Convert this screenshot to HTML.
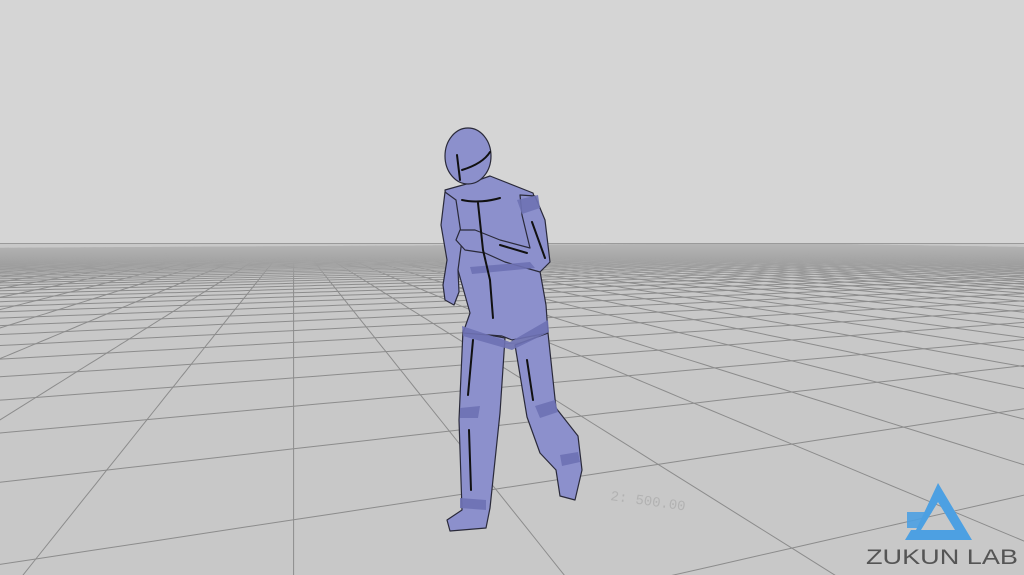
<!DOCTYPE html>
<html><head><meta charset="utf-8"><style>
html,body{margin:0;padding:0;width:1024px;height:575px;overflow:hidden;background:#d4d4d4}
svg{display:block}
</style></head><body>
<svg id="s" width="1024" height="575" viewBox="0 0 1024 575" xmlns="http://www.w3.org/2000/svg">
<defs><linearGradient id="fd" x1="0" y1="0" x2="0" y2="1">
<stop offset="0" stop-color="#c8c8c8" stop-opacity="0.7"/>
<stop offset="1" stop-color="#c8c8c8" stop-opacity="0"/></linearGradient></defs>
<rect width="1024" height="243" fill="#d5d5d5"/>
<rect y="243" width="1024" height="332" fill="#c8c8c8"/>
<g id="grid" stroke="#8c8c8c" stroke-width="1" fill="none"></g>
<rect y="243" width="1024" height="40" fill="url(#fd)"/>
<line x1="0" y1="243.5" x2="1024" y2="243.5" stroke="#9a9a9a" stroke-width="1"/>
<text x="610" y="500" font-family="Liberation Mono, monospace" font-size="14" fill="#b2b2b2" transform="rotate(8 610 500)">2: 500.00</text>
<g stroke="#2a2a3a" stroke-width="1.2" stroke-linejoin="round" fill="#8c90cc">
<path d="M515,345 L548,333 L556,408 L578,436 L582,470 L575,500 L560,496 L556,470 L540,453 L527,417 Z"/>
<path d="M463,330 L505,338 L500,413 L490,508 L486,528 L450,531 L447,520 L462,510 L459,420 Z"/>
<path d="M445,190 L470,183 L490,176 L533,193 L540,215 L538,260 L546,305 L548,333 L512,340 L502,336 L463,333 L470,313 L458,270 L450,240 Z"/>
<path d="M445,192 L456,200 L462,240 L458,270 L459,292 L454,305 L445,300 L443,285 L447,260 L441,225 Z"/>
<path d="M520,195 L535,196 L545,220 L550,262 L540,272 L505,262 L485,253 L465,250 L456,240 L460,230 L475,230 L500,240 L530,248 L522,215 Z"/>
<ellipse cx="468" cy="156" rx="23" ry="28"/>
</g>
<g fill="#6e72b4" opacity="0.9">
<path d="M517,200 L538,195 L540,208 L522,214 Z"/>
<path d="M462,326 L510,342 L548,320 L549,332 L512,350 L463,336 Z"/>
<path d="M460,408 L480,406 L478,418 L460,418 Z"/>
<path d="M535,406 L555,400 L558,412 L540,418 Z"/>
<path d="M460,498 L486,500 L486,510 L460,508 Z"/>
<path d="M560,455 L578,452 L580,462 L562,466 Z"/>
<path d="M470,267 L530,262 L535,268 L472,274 Z"/>
</g>
<g stroke="#111" stroke-width="2" fill="none" stroke-linecap="round">
<path d="M462,170 C475,166 485,160 490,152"/>
<path d="M457,155 L460,180"/>
<path d="M462,200 C475,203 490,201 500,198"/>
<path d="M478,203 L483,250 L490,280 L493,318"/>
<path d="M532,222 L545,258"/>
<path d="M500,245 L527,253"/>
<path d="M473,340 L468,395"/>
<path d="M527,360 L533,400"/>
<path d="M469,430 L471,490"/>
</g>
<g fill="#4da0e2">
<path d="M938,483 L972,540 L905,540 L911,530 L955,530 L938,502 L921,530 L916,530 Z"/>
<path d="M907,512 L932,512 L920,528 L907,528 Z" opacity="0.9"/>
</g>
<text x="866" y="564" font-family="Liberation Sans, sans-serif" font-size="21" fill="#555" textLength="152" lengthAdjust="spacingAndGlyphs">ZUKUN LAB</text>
</svg>
<script>
(function(){
var g=document.getElementById('grid'),f=600,h=2.0,cx=512,hy=236,th=20*Math.PI/180,S=1.5;
var c=Math.cos(th),s=Math.sin(th),out='';
function proj(u,v){u*=S;v*=S;var X=u*c-v*s,Z=u*s+v*c;return [X,Z];}
for(var k=-80;k<=80;k++){
 for(var fam=0;fam<2;fam++){
  var pts=[];
  for(var t=-80;t<=80;t+=0.2){
   var u=fam?k:t,v=fam?t:k;var p=proj(u,v);
   if(p[1]>0.5&&p[1]<160){pts.push((cx+f*p[0]/p[1]).toFixed(1)+','+(hy+f*h/p[1]).toFixed(1));}
   else if(pts.length>1){break;}
  }
  if(pts.length>1)out+='<polyline points="'+pts.join(' ')+'"/>';
 }
}
g.innerHTML=out;
})();
</script>
</body></html>
